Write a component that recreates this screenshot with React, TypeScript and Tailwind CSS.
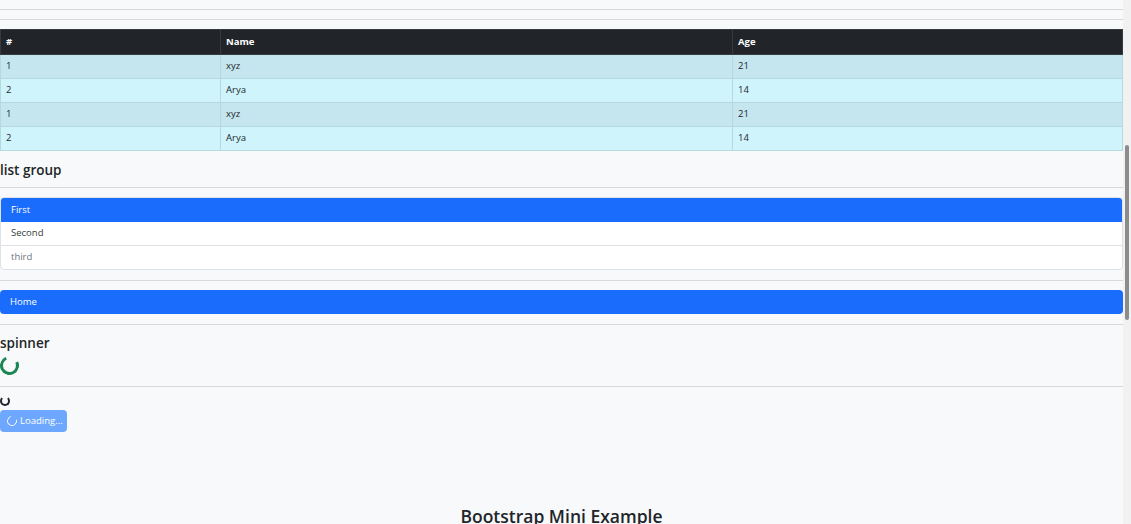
import React from 'react';

const rows = [
    { id: 1, name: 'xyz', age: 21 },
    { id: 2, name: 'Arya', age: 14 },
    { id: 1, name: 'xyz', age: 21 },
    { id: 2, name: 'Arya', age: 14 },
];

function Hr({ className = '' }: { className?: string }) {
    return <div className={`border-t border-[#d7d8d9] ${className}`} />;
}

export default function App() {
    return (
        <div
            className="flex h-[524px] w-full overflow-hidden bg-[#f8f9fa] text-[#212529]"
            style={{ fontFamily: '"Open Sans", "Noto Sans", sans-serif' }}
        >
            <div className="flex-1 min-w-0">
                <Hr className="mt-[9px]" />
                <Hr className="mt-[9px]" />

                {/* Table */}
                <table className="mt-[9px] w-full border-collapse text-[9.5px]">
                    <thead>
                        <tr className="h-[25px] bg-[#212529] text-white">
                            <th className="w-[220px] border border-[#373b3e] px-[5px] text-left font-bold">#</th>
                            <th className="w-[512px] border border-[#373b3e] px-[5px] text-left font-bold">Name</th>
                            <th className="border border-[#373b3e] px-[5px] text-left font-bold">Age</th>
                        </tr>
                    </thead>
                    <tbody>
                        {rows.map((r, i) => (
                            <tr key={i} className={`h-[24px] ${i % 2 === 0 ? 'bg-[#c5e6ee]' : 'bg-[#cff4fc]'}`}>
                                <td className="border border-[#b6d9e0] px-[5px]">{r.id}</td>
                                <td className="border border-[#b6d9e0] px-[5px]">{r.name}</td>
                                <td className="border border-[#b6d9e0] px-[5px]">{r.age}</td>
                            </tr>
                        ))}
                    </tbody>
                </table>

                {/* list group */}
                <h4 className="mt-[9px] h-[20px] text-[13.5px] font-semibold leading-[20px]">list group</h4>
                <Hr className="mt-[7px]" />
                <div className="mt-[9px] overflow-hidden rounded-[4px] border border-[#dee2e6] bg-white text-[9.5px]">
                    <div className="flex h-[24px] items-center bg-[#1a6cfd] px-[10px] text-white">First</div>
                    <div className="flex h-[24px] items-center border-b border-[#dee2e6] px-[10px] text-[#343a40]">Second</div>
                    <div className="flex h-[23px] items-center px-[10px] text-[#6c757d]">third</div>
                </div>

                <Hr className="mt-[10px]" />
                <div className="mt-[9px] flex h-[24px] items-center rounded-[4px] bg-[#1a6cfd] px-[10px] text-[9.5px] text-white">
                    Home
                </div>
                <Hr className="mt-[10px]" />

                {/* spinner */}
                <h4 className="mt-[8px] h-[20px] text-[13.5px] font-semibold leading-[20px]">spinner</h4>
                <div className="mt-[3px] h-[19px] w-[19px] rotate-[20deg] rounded-full border-[3px] border-[#198754] border-t-transparent" />
                <Hr className="mt-[11px]" />

                <div className="mt-[9px] h-[10px] w-[10px] rounded-full border-[2px] border-[#212529] border-t-transparent" />
                <button
                    disabled
                    className="mt-[4px] flex h-[22px] w-[67px] items-center gap-[3px] rounded-[4px] bg-[#6ea8fe] px-[7px] text-[9.5px] text-white"
                >
                    <span className="h-[10px] w-[10px] shrink-0 rotate-[30deg] rounded-full border-[1.5px] border-white border-t-transparent" />
                    Loading...
                </button>

                <h3 className="mt-[72px] text-center text-[17.5px] font-semibold leading-[24px]">Bootstrap Mini Example</h3>
            </div>

            {/* scrollbar */}
            <div className="w-[8px] shrink-0 bg-[#f1f1f1]">
                <div className="mx-auto mt-[145px] h-[175px] w-[4px] rounded-full bg-[#8c8c8c]" />
            </div>
        </div>
    );
}
